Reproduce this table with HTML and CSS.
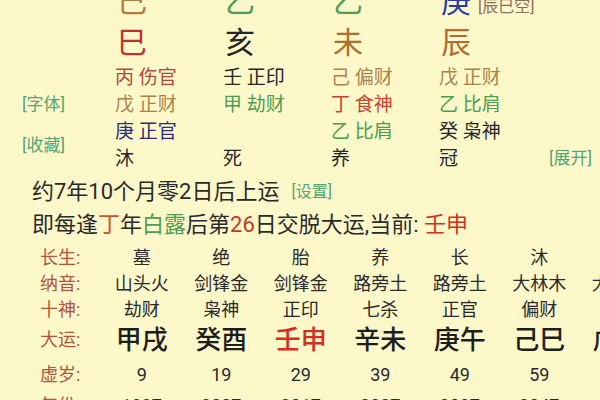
FILE: index.html
```html
<!DOCTYPE html>
<html lang="zh-CN">
<head>
<meta charset="utf-8">
<title>八字排盘</title>
<link rel="stylesheet" href="styles.css">
</head>
<body>
<div class="page">
  <div class="pillars">
    <div class="big c-earth first">己</div>
    <div class="big c-green">乙</div>
    <div class="big c-green">乙</div>
    <div class="big c-blue nowrap">庚<span class="void">[辰巳空]</span></div>
    <div></div>

    <div class="big c-red first">巳</div>
    <div class="big c-black">亥</div>
    <div class="big c-brown">未</div>
    <div class="big c-brown">辰</div>
    <div></div>

    <div class="side">
      <span class="link">[字体]</span>
      <span class="link">[收藏]</span>
    </div>

    <div class="hid c-rust">丙 伤官</div>
    <div class="hid c-black">壬 正印</div>
    <div class="hid c-tan">己 偏财</div>
    <div class="hid c-tan">戊 正财</div>
    <div></div>

    <div class="hid c-tan">戊 正财</div>
    <div class="hid c-green">甲 劫财</div>
    <div class="hid c-red2">丁 食神</div>
    <div class="hid c-green">乙 比肩</div>
    <div></div>

    <div class="hid c-navy">庚 正官</div>
    <div class="hid"></div>
    <div class="hid c-green">乙 比肩</div>
    <div class="hid c-black">癸 枭神</div>
    <div></div>

    <div class="hid c-black">沐</div>
    <div class="hid c-black">死</div>
    <div class="hid c-black">养</div>
    <div class="hid c-black">冠</div>
    <div class="expand"><span class="link">[展开]</span></div>
  </div>

  <div class="info">
    <div class="line">约7年10个月零2日后上运<span class="link setting">[设置]</span></div>
    <div class="line">即每逢<span class="c-ding">丁</span>年<span class="c-green">白露</span>后第<span class="c-num">26</span>日交脱大运,当前: <span class="c-cur">壬申</span></div>
  </div>

  <div class="luck">
    <div class="lab">长生:</div>
    <div class="cell">墓</div><div class="cell">绝</div><div class="cell">胎</div><div class="cell">养</div><div class="cell">长</div><div class="cell">沐</div><div class="cell">冠</div>

    <div class="lab">纳音:</div>
    <div class="cell">山头火</div><div class="cell">剑锋金</div><div class="cell">剑锋金</div><div class="cell">路旁土</div><div class="cell">路旁土</div><div class="cell">大林木</div><div class="cell">大林木</div>

    <div class="lab">十神:</div>
    <div class="cell">劫财</div><div class="cell">枭神</div><div class="cell">正印</div><div class="cell">七杀</div><div class="cell">正官</div><div class="cell">偏财</div><div class="cell">正财</div>

    <div class="lab">大运:</div>
    <div class="cell dayun">甲戌</div><div class="cell dayun">癸酉</div><div class="cell dayun c-cur">壬申</div><div class="cell dayun">辛未</div><div class="cell dayun">庚午</div><div class="cell dayun">己巳</div><div class="cell dayun">戊辰</div>

    <div class="lab">虚岁:</div>
    <div class="cell">9</div><div class="cell">19</div><div class="cell">29</div><div class="cell">39</div><div class="cell">49</div><div class="cell">59</div><div class="cell">69</div>

    <div class="lab">年份:</div>
    <div class="cell">1997</div><div class="cell">2007</div><div class="cell">2017</div><div class="cell">2027</div><div class="cell">2037</div><div class="cell">2047</div><div class="cell">2057</div>
  </div>
</div>
</body>
</html>
```
FILE: styles.css
```css
html, body {
  margin: 0;
  padding: 0;
  width: 600px;
  height: 400px;
  overflow: hidden;
  background: #fcf8ca;
}
body {
  font-family: Roboto, "Noto Sans CJK SC", sans-serif;
  color: #2a2a2a;
}
.page {
  width: 600px;
  overflow: hidden;
}
.pillars {
  display: grid;
  grid-template-columns: 115px repeat(4, 108px) 1fr;
  grid-template-rows: 40px 42px repeat(4, 27px);
  margin-top: -18px;
}
.pillars > .big.first { grid-column: 2; }
.big {
  font-size: 30px;
  line-height: 40px;
  padding-left: 2px;
}
.pillars > .big:nth-child(n+6) { line-height: 42px; }
.nowrap { white-space: nowrap; }
.void {
  font-size: 16px;
  color: #8c6f5e;
  margin-left: 7px;
}
.side {
  grid-column: 1;
  grid-row: 3 / 7;
  display: flex;
  flex-direction: column;
  align-items: flex-start;
  padding: 27px 0 0 22px;
  gap: 14px;
}
.side .link { line-height: 27px; }
.hid {
  font-size: 19px;
  line-height: 27px;
  white-space: nowrap;
}
.link {
  color: #56a374;
  font-size: 17px;
}
.expand {
  justify-self: end;
  padding-right: 8px;
  line-height: 27px;
  white-space: nowrap;
}
.info {
  padding: 3px 0 0 32px;
}
.line {
  font-size: 22px;
  line-height: 33px;
  white-space: nowrap;
}
.setting {
  margin-left: 12px;
  font-size: 16px;
  vertical-align: top;
}
.luck {
  display: grid;
  grid-template-columns: 102px repeat(7, 79.5px);
  grid-template-rows: 26px 26px 26px 34px 36px 26px;
  align-items: center;
  padding-top: 4px;
  width: 658px;
}
.lab {
  padding-left: 40px;
  font-size: 18px;
  line-height: 26px;
  color: #b4533c;
  white-space: nowrap;
}
.cell {
  text-align: center;
  font-size: 18px;
  line-height: 26px;
  white-space: nowrap;
}
.dayun {
  font-size: 26px;
  line-height: 34px;
  font-weight: 500;
  color: #1e1e1e;
}
.dayun.c-cur { color: #d32f1e; }

.c-earth { color: #b67a3a; }
.c-green { color: #4c9d50; }
.c-blue { color: #2b38a6; }
.c-red { color: #c2302a; }
.c-black { color: #262626; }
.c-brown { color: #b06e2c; }
.c-rust { color: #b04a36; }
.c-tan { color: #ad8248; }
.c-red2 { color: #c4442e; }
.c-navy { color: #2c2c78; }
.c-ding { color: #c8552b; }
.c-num { color: #c0392b; }
.c-cur { color: #d32f1e; }
```
